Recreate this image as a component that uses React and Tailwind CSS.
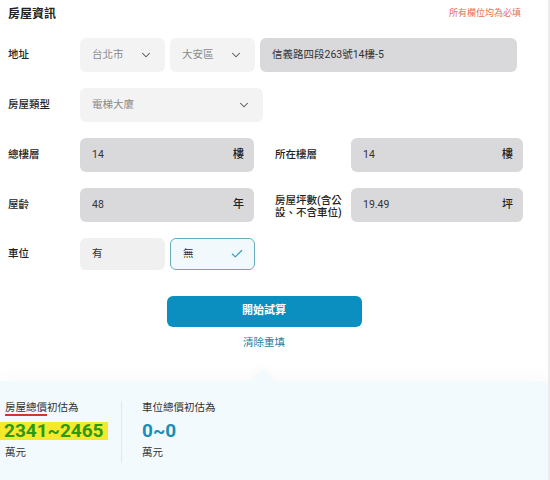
import React from 'react';
import { ChevronDown, Check } from 'lucide-react';

const Label = ({ children, className = '' }) => (
  <div className={`shrink-0 text-[10.5px] font-medium text-[#222] ${className}`}>{children}</div>
);

const Select = ({ value, className = '' }) => (
  <div className={`h-full flex items-center justify-between pl-3 pr-3 rounded-md bg-[#f3f3f3] text-[10.5px] text-[#8a8a8a] ${className}`}>
    <span>{value}</span>
    <ChevronDown className="w-3.5 h-3.5 text-[#555]" strokeWidth={1.8} />
  </div>
);

const Input = ({ value, unit, className = '' }) => (
  <div className={`h-full flex items-center justify-between pl-3 pr-2.5 rounded-md bg-[#d9d9dc] text-[10.5px] text-[#333] ${className}`}>
    <span>{value}</span>
    {unit && <span className="text-[11px] font-medium text-[#222]">{unit}</span>}
  </div>
);

const App = () => {
  return (
    <div className="w-full h-[480px] flex flex-col bg-white border-r-2 border-[#ececec] font-['Roboto','Noto_Sans_CJK_TC',sans-serif] overflow-hidden">
      {/* Form */}
      <div className="px-2 pt-[6px]">
        <div className="h-4 flex items-center justify-between pr-[19px]">
          <h2 className="text-[12px] font-bold text-[#222]">房屋資訊</h2>
          <span className="text-[9px] text-[#e8704a]">所有欄位均為必填</span>
        </div>

        <div className="mt-4 flex flex-col gap-4">
          <div className="h-[34px] flex items-center">
            <Label className="w-[72px]">地址</Label>
            <div className="h-full flex gap-[5px]">
              <Select value="台北市" className="w-[85px]" />
              <Select value="大安區" className="w-[85px]" />
              <Input value="信義路四段263號14樓-5" className="w-[257px]" />
            </div>
          </div>

          <div className="h-[34px] flex items-center">
            <Label className="w-[72px]">房屋類型</Label>
            <Select value="電梯大廈" className="w-[183px]" />
          </div>

          <div className="h-[34px] flex items-center">
            <Label className="w-[72px]">總樓層</Label>
            <Input value="14" unit="樓" className="w-[174px]" />
            <Label className="w-[76px] ml-[21px]">所在樓層</Label>
            <Input value="14" unit="樓" className="w-[172px]" />
          </div>

          <div className="h-[34px] flex items-center">
            <Label className="w-[72px]">屋齡</Label>
            <Input value="48" unit="年" className="w-[174px]" />
            <Label className="w-[76px] ml-[21px] leading-[12px] pt-[4px]">
              房屋坪數(含公<br />設、不含車位)
            </Label>
            <Input value="19.49" unit="坪" className="w-[172px]" />
          </div>

          <div className="h-[32px] flex items-center">
            <Label className="w-[72px]">車位</Label>
            <div className="h-full flex gap-[5px]">
              <div className="w-[85px] h-full flex items-center pl-3 rounded-md bg-[#f0f0f0] text-[10.5px] text-[#333]">有</div>
              <div className="w-[85px] h-full flex items-center justify-between pl-3 pr-2.5 rounded-md bg-[#f1f9fc] border border-[#69adbd] text-[10.5px] text-[#333]">
                <span>無</span>
                <Check className="w-3.5 h-3.5 text-[#2c9fb8]" strokeWidth={2} />
              </div>
            </div>
          </div>
        </div>

        <div className="mt-[26px] pr-[20px] flex flex-col items-center">
          <button className="w-[195px] h-[31px] rounded-md bg-[#0b8fc1] text-white text-[11px] font-bold">
            開始試算
          </button>
          <button className="mt-[9px] leading-[14px] text-[10.5px] text-[#1b80a3]">清除重填</button>
        </div>
      </div>

      {/* Result panel */}
      <div className="relative mt-[31px] flex-1 bg-[#f3fafd] shadow-[0_-8px_14px_rgba(0,0,0,0.02)]">
        <div className="absolute left-[254px] -top-[9px] w-[18px] h-[18px] rotate-45 bg-[#f3fafd] shadow-[-3px_-3px_6px_rgba(0,0,0,0.015)]" />
        <div className="relative flex pt-[20px]">
          <div className="w-[122px] border-r border-[#e4e8ea] pb-[3px]">
            <div className="pl-[5px] text-[10.5px] leading-[14px] text-[#333]">
              <span className="underline decoration-[#d9342b] decoration-[1.5px] underline-offset-[3px]">房屋總價</span>初估為
            </div>
            <div className="mt-[7px] w-fit bg-[#f6e82a] px-[4px] text-[19px] leading-[18px] font-bold text-[#2a9a16]">
              2341~2465
            </div>
            <div className="mt-[6px] pl-[5px] text-[10.5px] leading-[14px] text-[#333]">萬元</div>
          </div>
          <div className="pl-5">
            <div className="text-[10.5px] leading-[14px] text-[#333]">車位總價初估為</div>
            <div className="mt-[7px] text-[19px] leading-[18px] font-bold text-[#1b8db8]">0~0</div>
            <div className="mt-[6px] text-[10.5px] leading-[14px] text-[#333]">萬元</div>
          </div>
        </div>
      </div>
    </div>
  );
};

export default App;
